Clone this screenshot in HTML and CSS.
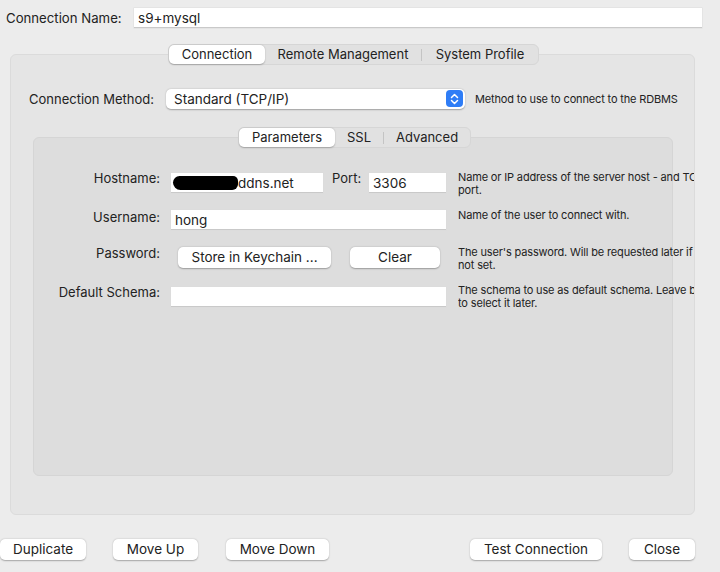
FILE: index.html
```html
<!DOCTYPE html>
<html>
<head>
<meta charset="utf-8">
<link rel="stylesheet" href="styles.css">
</head>
<body>
<div class="window">
  <div class="name-row">
    <span class="name-label">Connection Name:</span>
    <div class="field name-field">s9+mysql</div>
  </div>

  <div class="tabs outer-tabs">
    <div class="tab active">Connection</div>
    <div class="tab">Remote Management</div>
    <div class="sep"></div>
    <div class="tab">System Profile</div>
  </div>
  <div class="panel outer">
    <div class="method-row">
      <span class="method-label">Connection Method:</span>
      <div class="select">
        <span>Standard (TCP/IP)</span>
        <span class="stepper">
          <svg width="9" height="12" viewBox="0 0 9 12"><path d="M1.5 4.5 L4.5 1.5 L7.5 4.5 M1.5 7.5 L4.5 10.5 L7.5 7.5" fill="none" stroke="#fff" stroke-width="1.5" stroke-linecap="round" stroke-linejoin="round"/></svg>
        </span>
      </div>
      <span class="method-help">Method to use to connect to the RDBMS</span>
    </div>

    <div class="tabs inner-tabs">
      <div class="tab active">Parameters</div>
      <div class="tab">SSL</div>
      <div class="sep"></div>
      <div class="tab">Advanced</div>
    </div>
    <div class="panel inner">
      <div class="row row-host">
        <span class="label">Hostname:</span>
        <div class="field host-field"><span class="redact"></span>ddns.net</div>
        <span class="port-label">Port:</span>
        <div class="field port-field">3306</div>
        <div class="help">Name or IP address of the server host - and TCP/IP<br>port.</div>
      </div>
      <div class="row row-user">
        <span class="label">Username:</span>
        <div class="field wide-field">hong</div>
        <div class="help">Name of the user to connect with.</div>
      </div>
      <div class="row row-pass">
        <span class="label">Password:</span>
        <div class="btn keychain">Store in Keychain ...</div>
        <div class="btn clear">Clear</div>
        <div class="help help-pass">The user's password. Will be requested later if it's<br>not set.</div>
      </div>
      <div class="row row-schema">
        <span class="label">Default Schema:</span>
        <div class="field wide-field"></div>
        <div class="help">The schema to use as default schema. Leave blank<br>to select it later.</div>
      </div>
    </div>
  </div>

  <div class="bottom">
    <div class="btn b-dup">Duplicate</div>
    <div class="btn b-up">Move Up</div>
    <div class="btn b-down">Move Down</div>
    <div class="spacer"></div>
    <div class="btn b-test">Test Connection</div>
    <div class="btn b-close">Close</div>
  </div>
</div>
</body>
</html>
```

FILE: styles.css
```css
* { box-sizing: border-box; }
html, body {
  margin: 0;
  padding: 0;
  background: #ececec;
}
body {
  font-family: "Inter", "Noto Sans", sans-serif;
  font-size: 13px;
  color: #222;
  width: 720px;
  height: 572px;
  overflow: hidden;
}
.window {
  width: 720px;
  height: 572px;
}

/* connection name */
.name-row {
  display: flex;
  align-items: center;
  padding-top: 8px;
  height: 28px;
}
.name-label {
  margin-left: 6px;
  width: 128px;
  line-height: 20px;
  font-size: 13.2px;
}
.field {
  background: #fff;
  height: 20px;
  line-height: 21px;
  padding-left: 4px;
  border-bottom: 1px solid #c9c9c9;
  box-shadow: 0 0 0 0.5px #dcdcdc;
  font-size: 13.5px;
  white-space: nowrap;
  overflow: hidden;
}
.name-field {
  width: 568px;
}

/* tabs */
.tabs {
  display: flex;
  align-items: center;
  margin: 0 auto;
  height: 21px;
  background: #e1e1e1;
  border: 1px solid #d6d6d6;
  border-radius: 6px;
  position: relative;
  z-index: 1;
}
.tab {
  height: 19px;
  line-height: 19px;
  padding: 0 12px;
  white-space: nowrap;
}
.tab.active {
  background: #fff;
  border-radius: 5px;
  box-shadow: 0 0.5px 1.5px rgba(0,0,0,0.25);
}
.sep {
  width: 1px;
  height: 12px;
  background: #c4c4c4;
}
.outer-tabs {
  margin-top: 16px;
  margin-left: 168px;
  width: 371px;
  margin-bottom: -11px;
}
.outer-tabs .tab.active { width: 96px; text-align: center; padding: 0; }
.outer-tabs .tab:nth-child(2) { width: 156px; text-align: center; padding: 0; }
.outer-tabs .tab:nth-child(4) { flex: 1; text-align: center; padding: 0; }

.inner-tabs {
  margin-left: 227px;
  width: 233px;
  margin-bottom: -11px;
  margin-top: 18px;
}
.inner-tabs .tab.active { width: 96px; text-align: center; padding: 0; }
.inner-tabs .tab:nth-child(2) { width: 48px; text-align: center; padding: 0; }
.inner-tabs .tab:nth-child(4) { flex: 1; text-align: center; padding: 0; }

/* panels */
.panel {
  border-radius: 6px;
  border: 1px solid #dbdbdb;
}
.outer {
  margin-left: 10px;
  width: 685px;
  height: 461px;
  background: #e5e5e5;
  padding-top: 33px;
}
.inner {
  margin-left: 22px;
  width: 640px;
  height: 339px;
  background: #dddddd;
  border-color: #d5d5d5;
  padding-top: 35px;
}

/* method row */
.method-row {
  display: flex;
  align-items: center;
  height: 21px;
}
.method-label {
  margin-left: 18px;
  width: 137px;
  flex: none;
}
.select {
  width: 299px;
  height: 20px;
  background: #fff;
  border-radius: 5px;
  box-shadow: 0 0.5px 1.5px rgba(0,0,0,0.3);
  display: flex;
  align-items: center;
  justify-content: space-between;
  padding-left: 8px;
  padding-right: 2px;
  font-size: 13.5px;
  flex: none;
}
.stepper {
  width: 17px;
  height: 17px;
  background: #2f7df6;
  border-radius: 4px;
  display: flex;
  align-items: center;
  justify-content: center;
}
.method-help {
  margin-left: 10px;
  font-size: 11px;
  letter-spacing: -0.15px;
  white-space: nowrap;
}

/* parameter rows */
.row {
  display: flex;
  align-items: flex-start;
  height: 20px;
}
.label {
  width: 126px;
  text-align: right;
  margin-top: -3px;
  line-height: 16px;
  flex: none;
}
.row .field { margin-left: 11px; flex: none; }
.host-field { width: 152px; padding-left: 2px; }
.redact {
  display: inline-block;
  width: 65px;
  height: 14px;
  background: #000;
  border-radius: 8px 6px 7px 9px;
  vertical-align: -2px;
}
.port-label {
  margin-left: 9px;
  width: 37px;
  line-height: 16px;
  margin-top: -3px;
  flex: none;
}
.row .port-field { margin-left: 0; width: 77px; }
.wide-field { width: 275px; }
.help {
  margin-left: 12px;
  width: 236px;
  font-size: 11px;
  letter-spacing: -0.15px;
  line-height: 13px;
  white-space: nowrap;
  overflow: hidden;
  margin-top: -2px;
  flex: none;
  position: relative;
  z-index: 1;
}
.row-user { margin-top: 17px; }
.row-pass { margin-top: 17px; height: 21px; }
.row-schema { margin-top: 19px; }
.row-user .label { margin-top: -1px; }
.row-user .help { margin-top: -1px; }
.row-pass .help { margin-top: -1px; }
.row-pass .label { margin-top: -2px; }
.row-schema .help { margin-top: -3px; }

.btn {
  background: #fff;
  border-radius: 5px;
  box-shadow: 0 0.5px 1.5px rgba(0,0,0,0.3);
  height: 21px;
  line-height: 21px;
  text-align: center;
  font-size: 13.5px;
  white-space: nowrap;
  flex: none;
}
.keychain { margin-left: 18px; width: 153px; }
.clear { margin-left: 19px; width: 90px; }
.help-pass { margin-left: 18px; }

/* bottom */
.bottom {
  display: flex;
  margin-top: 24px;
  width: 720px;
}
.b-dup { width: 86px; }
.b-up { margin-left: 27px; width: 85px; }
.b-down { margin-left: 28px; width: 103px; }
.spacer { width: 141px; }
.b-test { width: 132px; }
.b-close { margin-left: 27px; width: 66px; }
```
